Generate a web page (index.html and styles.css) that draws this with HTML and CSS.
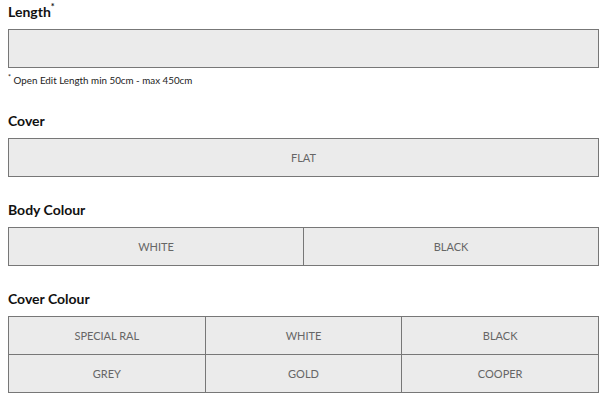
FILE: index.html
```html
<!DOCTYPE html>
<html lang="en">
<head>
    <meta charset="UTF-8">
    <meta name="viewport" content="width=device-width, initial-scale=1.0">
    <title>Product Options</title>
    <link rel="stylesheet" href="styles.css">
</head>
<body>
    <!-- Length -->
    <div class="field field-length">
        <h3 class="field-label">Length<sup>*</sup></h3>
        <input class="text-input" type="text">
        <p class="note"><sup>*</sup> Open Edit Length min 50cm - max 450cm</p>
    </div>

    <!-- Cover -->
    <div class="field">
        <h3 class="field-label">Cover</h3>
        <div class="options cols-1">
            <button class="option">FLAT</button>
        </div>
    </div>

    <!-- Body Colour -->
    <div class="field">
        <h3 class="field-label">Body Colour</h3>
        <div class="options cols-2">
            <button class="option">WHITE</button>
            <button class="option">BLACK</button>
        </div>
    </div>

    <!-- Cover Colour -->
    <div class="field">
        <h3 class="field-label">Cover Colour</h3>
        <div class="options cols-3">
            <button class="option">SPECIAL RAL</button>
            <button class="option">WHITE</button>
            <button class="option">BLACK</button>
            <button class="option">GREY</button>
            <button class="option">GOLD</button>
            <button class="option">COOPER</button>
        </div>
    </div>
</body>
</html>
```

FILE: styles.css
```css
body {
    font-family: Lato, "Open Sans", sans-serif;
    background-color: #ffffff;
    color: #111111;
    margin: 0;
    padding: 3px 17px 0 8px;
}
.field {
    margin-bottom: 24px;
}
.field-length {
    margin-bottom: 26px;
}
.field-label {
    font-size: 14px;
    font-weight: bold;
    line-height: 17px;
    margin: 0 0 9px 0;
}
.field-label sup {
    font-size: 9px;
    line-height: 0;
    vertical-align: 7px;
}
.text-input {
    display: block;
    box-sizing: border-box;
    width: 100%;
    height: 39px;
    margin: 0;
    border: 1px solid #777777;
    background-color: #ebebeb;
    outline: none;
}
.note {
    font-size: 9.8px;
    line-height: 12px;
    color: #222222;
    margin: 6px 0 0 0;
}
.note sup {
    font-size: 7px;
    line-height: 0;
    vertical-align: 4px;
}
.options {
    display: grid;
    gap: 1px;
    background-color: #777777;
    border: 1px solid #777777;
}
.cols-1 {
    grid-template-columns: 1fr;
}
.cols-2 {
    grid-template-columns: 1fr 1fr;
}
.cols-3 {
    grid-template-columns: 1fr 1fr 1fr;
}
.option {
    height: 37px;
    border: none;
    margin: 0;
    padding: 0;
    background-color: #ebebeb;
    color: #666666;
    font-family: Lato, "Open Sans", sans-serif;
    font-size: 11px;
    cursor: pointer;
}
.option:hover {
    background-color: #e0e0e0;
}
```
